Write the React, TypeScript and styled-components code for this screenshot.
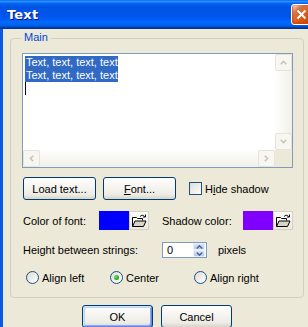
import React from "react";
import styled, { createGlobalStyle } from "styled-components";

const GlobalStyle = createGlobalStyle`
  html, body {
    margin: 0;
    padding: 0;
    width: 308px;
    height: 327px;
    overflow: hidden;
    background: #ece9d8;
  }
  body {
    font-family: "Liberation Sans", Arial, sans-serif;
    font-size: 11px;
    color: #000;
  }
`;

const Window = styled.div`
  width: 318px;
  display: flex;
  flex-direction: column;
`;

const TitleBar = styled.div`
  height: 29px;
  box-sizing: border-box;
  display: flex;
  align-items: center;
  justify-content: space-between;
  padding: 0 6px 0 7px;
  background: linear-gradient(
    180deg,
    #0058ee 0%,
    #3593ff 4%,
    #288eff 6%,
    #127dff 8%,
    #036ffc 10%,
    #0262ee 14%,
    #0057e5 20%,
    #0054e3 24%,
    #0055eb 56%,
    #005bf5 66%,
    #026afe 76%,
    #0062ef 86%,
    #0052d6 92%,
    #0040ab 94%,
    #003092 100%
  );
`;

const Title = styled.span`
  font-family: "DejaVu Sans", Verdana, sans-serif;
  font-weight: bold;
  font-size: 13px;
  color: #fff;
  text-shadow: 1px 1px #0f1089;
  letter-spacing: 0.2px;
`;

const CloseButton = styled.div`
  width: 21px;
  height: 21px;
  box-sizing: border-box;
  border: 1px solid #fff;
  border-radius: 3px;
  display: flex;
  align-items: center;
  justify-content: center;
  background: radial-gradient(
    circle at 90% 90%,
    #cc4600 0%,
    #dc6527 55%,
    #cd7546 70%,
    #ffccb2 90%,
    #fff 100%
  );
  box-shadow: inset 0 -1px 2px 1px #da4600;
`;

const Body = styled.div`
  background: #ece9d8;
  border-left: 3px solid #0b5ae3;
  border-right: 3px solid #0b5ae3;
  padding: 9px 11px 10px 7px;
  display: flex;
  flex-direction: column;
`;

const GroupBox = styled.div`
  position: relative;
  border: 1px solid #d0d0bf;
  border-radius: 4px;
  padding: 14px 10px 12px 11px;
  display: flex;
  flex-direction: column;
`;

const Legend = styled.span`
  position: absolute;
  top: -8px;
  left: 10px;
  padding: 0 3px;
  line-height: 13px;
  background: #ece9d8;
  color: #0046d5;
`;

const Memo = styled.div`
  height: 115px;
  box-sizing: border-box;
  border: 1px solid #7f9db9;
  background: #fff;
  display: grid;
  grid-template-columns: 1fr 17px;
  grid-template-rows: 1fr 17px;
`;

const MemoText = styled.div`
  padding: 2px 0 0 2px;
  line-height: 13px;
`;

const Selected = styled.span`
  display: block;
  width: fit-content;
  padding-left: 1px;
  background: #316ac5;
  color: #fff;
  white-space: pre;
`;

const Caret = styled.span`
  display: block;
  width: 1px;
  height: 13px;
  background: #000;
`;

const VScroll = styled.div`
  display: flex;
  flex-direction: column;
  justify-content: space-between;
  background: linear-gradient(90deg, #fefefc, #f1f0ea);
`;

const HScroll = styled.div`
  display: flex;
  justify-content: space-between;
  background: linear-gradient(180deg, #fefefc, #f1f0ea);
`;

const ScrollCorner = styled.div`
  background: #ece9d8;
`;

const ScrollButton = styled.div<{ $rotate: number }>`
  width: 17px;
  height: 17px;
  box-sizing: border-box;
  border: 1px solid #e6e4d9;
  border-radius: 2px;
  background: #f7f6f1;
  display: flex;
  align-items: center;
  justify-content: center;
  svg {
    transform: rotate(${(p) => p.$rotate}deg);
  }
`;

const Row = styled.div<{ $mt: number; $h: number }>`
  display: flex;
  align-items: center;
  margin-top: ${(p) => p.$mt}px;
  height: ${(p) => p.$h}px;
  padding-left: 1px;
`;

const XPButton = styled.div<{ $w: number; $default?: boolean }>`
  width: ${(p) => p.$w}px;
  height: 23px;
  box-sizing: border-box;
  border: 1px solid #003c74;
  border-radius: 3px;
  display: flex;
  align-items: center;
  justify-content: center;
  background: linear-gradient(
    180deg,
    #ffffff 0%,
    #f6f5f1 40%,
    #ecebe4 80%,
    #d8d4c8 100%
  );
  box-shadow: ${(p) =>
    p.$default
      ? "inset 1px 1px 0 #cee7ff, inset -1px -1px 0 #6982ee, inset 2px 2px 0 #bcd4f6, inset -2px -2px 0 #89adf0"
      : "none"};
`;

const Accel = styled.span`
  text-decoration: underline;
`;

const CheckBox = styled.span`
  width: 13px;
  height: 13px;
  box-sizing: border-box;
  border: 1px solid #1c5180;
  background: linear-gradient(135deg, #dcdcd7, #ffffff);
`;

const Label = styled.span<{ $w?: number; $ml?: number }>`
  ${(p) => (p.$w ? `width: ${p.$w}px; flex: none;` : "")}
  margin-left: ${(p) => p.$ml ?? 0}px;
  white-space: nowrap;
`;

const Swatch = styled.span<{ $color: string }>`
  width: 30px;
  height: 19px;
  background: ${(p) => p.$color};
`;

const FolderButton = styled.span`
  width: 20px;
  height: 19px;
  box-sizing: border-box;
  border: 1px solid #d4d0c2;
  background: linear-gradient(180deg, #fbfbf8, #ebe9e0);
  display: flex;
  align-items: center;
  justify-content: center;
`;

const SpinEdit = styled.div`
  width: 45px;
  height: 16px;
  box-sizing: border-box;
  border: 1px solid #7f9db9;
  background: #fff;
  display: flex;
  align-items: center;
  justify-content: space-between;
  padding: 0 1px 0 4px;
`;

const SpinButtons = styled.div`
  width: 12px;
  height: 14px;
  display: flex;
  flex-direction: column;
`;

const SpinHalf = styled.span<{ $rotate: number }>`
  flex: 1;
  box-sizing: border-box;
  border: 1px solid #e6edfc;
  border-radius: 1px;
  background: linear-gradient(180deg, #dbe5fb, #b7c9f3);
  display: flex;
  align-items: center;
  justify-content: center;
  svg {
    transform: rotate(${(p) => p.$rotate}deg);
  }
`;

const RadioRow = styled.div`
  display: grid;
  grid-template-columns: 84px 84px 84px;
  margin-top: 12px;
  height: 15px;
  padding-left: 4px;
  align-items: center;
`;

const RadioItem = styled.label`
  display: flex;
  align-items: center;
  gap: 3px;
`;

const Radio = styled.span<{ $checked?: boolean }>`
  width: 13px;
  height: 13px;
  box-sizing: border-box;
  border-radius: 50%;
  border: 1px solid #1c5180;
  background: linear-gradient(135deg, #dcdcd7, #ffffff);
  display: flex;
  align-items: center;
  justify-content: center;
  &::after {
    content: "";
    display: ${(p) => (p.$checked ? "block" : "none")};
    width: 5px;
    height: 5px;
    border-radius: 50%;
    background: radial-gradient(circle at 35% 35%, #6fe06b, #21a121 70%, #1a8e1a);
  }
`;

const Footer = styled.div`
  display: flex;
  justify-content: center;
  gap: 8px;
  margin-top: 7px;
`;

const Chevron = ({ color }: { color: string }) => (
  <svg width="7" height="5" viewBox="0 0 7 5">
    <path d="M0.7 4.2 L3.5 1.4 L6.3 4.2" stroke={color} strokeWidth="1.6" fill="none" />
  </svg>
);

const SpinArrow = () => (
  <svg width="7" height="4" viewBox="0 0 7 4">
    <path d="M0.8 3.5 L3.5 0.8 L6.2 3.5" stroke="#4d6185" strokeWidth="1.4" fill="none" />
  </svg>
);

const FolderIcon = () => (
  <svg width="16" height="14" viewBox="0 0 16 14">
    <path d="M1.5 12.5V3.5h4l1 1h5v2" fill="#fff" stroke="#000" />
    <path
      d="M1.5 12.5l2.5-5.5h11l-2.5 5.5z"
      fill="#d8d5c6"
      stroke="#000"
      strokeLinejoin="round"
    />
    <path d="M9 2.5c1.5-1.6 3.4-1.6 4.6 0" fill="none" stroke="#000" />
    <path d="M14.5 0.5v2.5h-2.5" fill="none" stroke="#000" />
  </svg>
);

const CloseIcon = () => (
  <svg width="11" height="11" viewBox="0 0 11 11">
    <path d="M1.5 1.5 L9.5 9.5 M9.5 1.5 L1.5 9.5" stroke="#fff" strokeWidth="2" />
  </svg>
);

export default function App() {
  return (
    <>
      <GlobalStyle />
      <Window>
        <TitleBar>
          <Title>Text</Title>
          <CloseButton>
            <CloseIcon />
          </CloseButton>
        </TitleBar>
        <Body>
          <GroupBox>
            <Legend>Main</Legend>
            <Memo>
              <MemoText>
                <Selected>Text, text, text, text</Selected>
                <Selected>Text, text, text, text</Selected>
                <Caret />
              </MemoText>
              <VScroll>
                <ScrollButton $rotate={0}>
                  <Chevron color="#c8c6b8" />
                </ScrollButton>
                <ScrollButton $rotate={180}>
                  <Chevron color="#c8c6b8" />
                </ScrollButton>
              </VScroll>
              <HScroll>
                <ScrollButton $rotate={-90}>
                  <Chevron color="#c8c6b8" />
                </ScrollButton>
                <ScrollButton $rotate={90}>
                  <Chevron color="#c8c6b8" />
                </ScrollButton>
              </HScroll>
              <ScrollCorner />
            </Memo>

            <Row $mt={9} $h={23}>
              <XPButton $w={73}>Load text...</XPButton>
              <XPButton $w={73} style={{ marginLeft: 7 }}>
                <span>
                  <Accel>F</Accel>ont...
                </span>
              </XPButton>
              <CheckBox style={{ marginLeft: 13 }} />
              <Label $ml={3}>
                H<Accel>i</Accel>de shadow
              </Label>
            </Row>

            <Row $mt={11} $h={19}>
              <Label $w={76}>Color of font:</Label>
              <Swatch $color="#0000ff" />
              <FolderButton>
                <FolderIcon />
              </FolderButton>
              <Label $w={81} $ml={13}>
                Shadow color:
              </Label>
              <Swatch $color="#8000ff" />
              <FolderButton>
                <FolderIcon />
              </FolderButton>
            </Row>

            <Row $mt={12} $h={16}>
              <Label $w={139}>Height between strings:</Label>
              <SpinEdit>
                <span>0</span>
                <SpinButtons>
                  <SpinHalf $rotate={0}>
                    <SpinArrow />
                  </SpinHalf>
                  <SpinHalf $rotate={180}>
                    <SpinArrow />
                  </SpinHalf>
                </SpinButtons>
              </SpinEdit>
              <Label $ml={11}>pixels</Label>
            </Row>

            <RadioRow>
              <RadioItem>
                <Radio />
                Align left
              </RadioItem>
              <RadioItem>
                <Radio $checked />
                Center
              </RadioItem>
              <RadioItem>
                <Radio />
                Align right
              </RadioItem>
            </RadioRow>
          </GroupBox>

          <Footer>
            <XPButton $w={71} $default>
              OK
            </XPButton>
            <XPButton $w={71}>Cancel</XPButton>
          </Footer>
        </Body>
      </Window>
    </>
  );
}
